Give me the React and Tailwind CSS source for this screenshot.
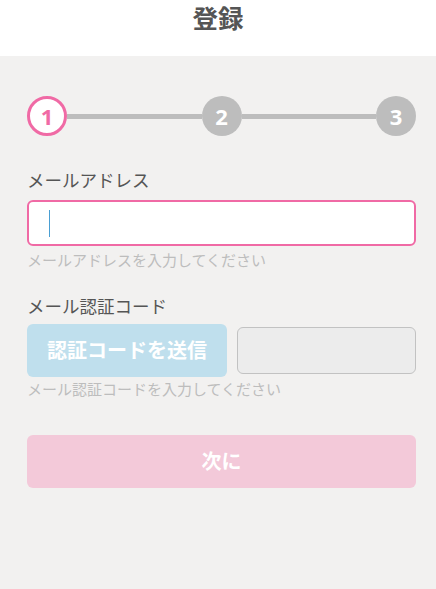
export default function App() {
  const font = { fontFamily: '"Noto Sans", "Noto Sans CJK JP", sans-serif' };
  return (
    <div className="w-[436px] h-[589px] bg-[#f2f1f0] flex flex-col" style={font}>
      <header className="h-[56px] bg-white flex items-center justify-center">
        <h1 className="text-[25.5px] font-bold text-[#555555] leading-none -mt-[18px]">登録</h1>
      </header>

      <main className="flex flex-col pl-[27px] pr-[20px] pt-[40px]">
        {/* ステップ */}
        <div className="flex items-center">
          <div className="w-[40px] h-[40px] rounded-full bg-white border-[3px] border-[#f06aa5] flex items-center justify-center text-[#f06aa5] text-[22px] font-bold leading-none">1</div>
          <div className="flex-1 h-[5px] bg-[#bdbdbd]"></div>
          <div className="w-[40px] h-[40px] rounded-full bg-[#bdbdbd] flex items-center justify-center text-white text-[22px] font-bold leading-none">2</div>
          <div className="flex-1 h-[5px] bg-[#bdbdbd]"></div>
          <div className="w-[40px] h-[40px] rounded-full bg-[#bdbdbd] flex items-center justify-center text-white text-[22px] font-bold leading-none">3</div>
        </div>

        {/* メールアドレス */}
        <label className="mt-[32px] text-[17.5px] leading-[24px] text-[#555555]">メールアドレス</label>
        <div className="mt-[8px] h-[46px] bg-white border-2 border-[#f06aa5] rounded-[6px] flex items-center px-[20px]">
          <div className="w-px h-[27px] bg-[#4a9fd3]"></div>
        </div>
        <p className="mt-[4px] text-[15px] leading-[20px] text-[#bdbdbd]">メールアドレスを入力してください</p>

        {/* メール認証コード */}
        <label className="mt-[24px] text-[17.5px] leading-[24px] text-[#555555]">メール認証コード</label>
        <div className="mt-[6px] flex items-center gap-[10px]">
          <button className="w-[200px] h-[53px] bg-[#bfdfed] rounded-[6px] text-white text-[20px] font-bold">認証コードを送信</button>
          <div className="flex-1 h-[47px] bg-[#ececec] border border-[#c2c2c2] rounded-[6px]"></div>
        </div>
        <p className="mt-[2px] text-[15px] leading-[20px] text-[#bdbdbd]">メール認証コードを入力してください</p>

        <button className="mt-[36px] h-[53px] bg-[#f3c9d9] rounded-[6px] text-white text-[20px] font-bold">次に</button>
      </main>
    </div>
  );
}
